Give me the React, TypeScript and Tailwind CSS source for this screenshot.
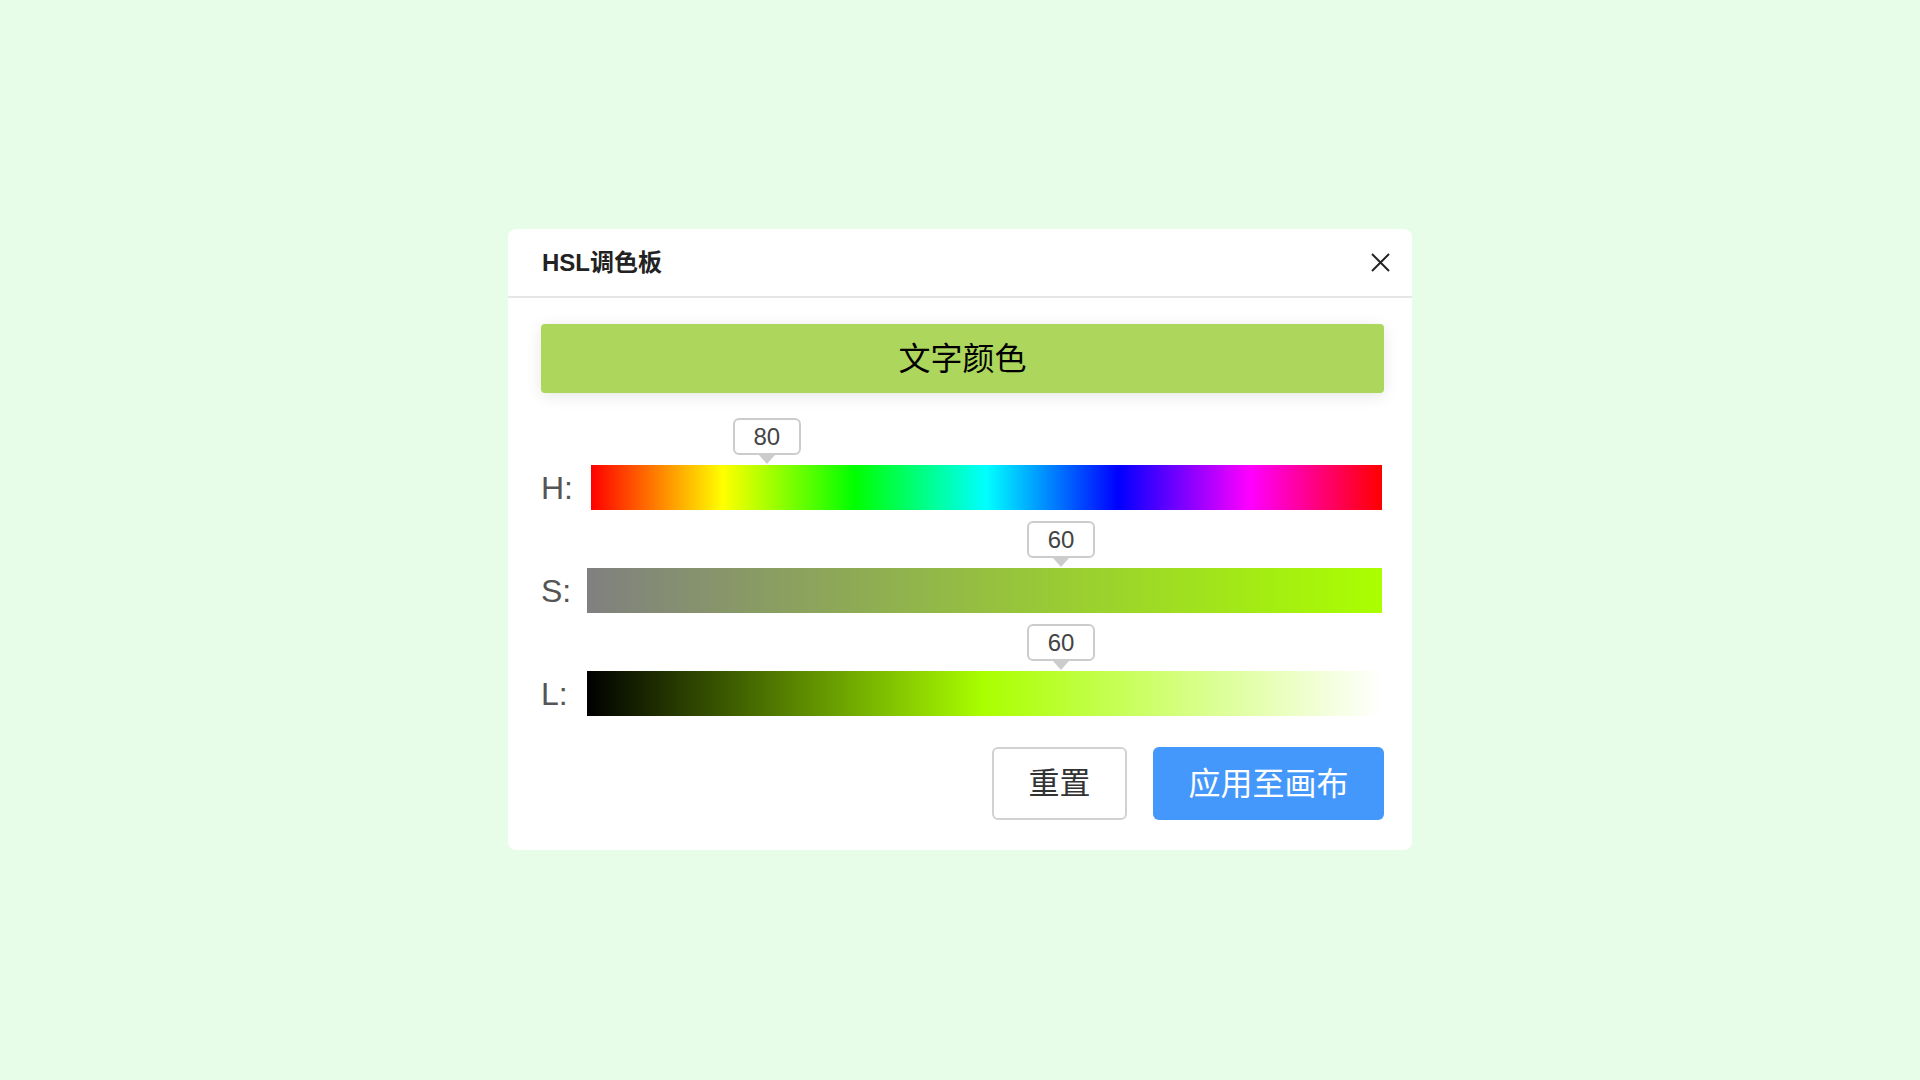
import React from "react";

const FONT = '"Liberation Sans", "Noto Sans CJK SC", sans-serif';

function Tip({ value, left }: { value: number; left: string }) {
  return (
    <div
      className="absolute bottom-full flex flex-col items-center -translate-x-1/2 mb-[1px]"
      style={{ left }}
    >
      <div className="w-[68px] h-[37px] bg-white border-2 border-[#cccccc] rounded-[6px] flex items-center justify-center text-[24px] leading-none text-[#444444]">
        {value}
      </div>
      <div className="w-0 h-0 border-l-[8px] border-r-[8px] border-t-[9px] border-l-transparent border-r-transparent border-t-[#cccccc]" />
    </div>
  );
}

function Row({
  label,
  value,
  left,
  labelClass,
  barClass,
}: {
  label: string;
  value: number;
  left: string;
  labelClass: string;
  barClass: string;
}) {
  return (
    <div className="flex items-center">
      <div className={`text-[32px] leading-none text-[#555555] ${labelClass}`}>{label}</div>
      <div className={`relative flex-1 h-[45px] mr-[2px] ${barClass}`}>
        <Tip value={value} left={left} />
      </div>
    </div>
  );
}

export default function App() {
  return (
    <div
      className="w-full h-[1080px] bg-[#e7fde7] flex items-start justify-center"
      style={{ fontFamily: FONT }}
    >
      <div className="mt-[229px] w-[904px] bg-white rounded-[8px] flex flex-col">
        <div className="h-[69px] border-b-2 border-[#e6e6e6] flex items-center justify-between pl-[34px] pr-[22px]">
          <div className="text-[24px] font-bold text-[#222222] leading-none">HSL调色板</div>
          <svg width="19" height="19" viewBox="0 0 19 19" className="block">
            <line x1="1" y1="1" x2="18" y2="18" stroke="#222222" strokeWidth="2" />
            <line x1="18" y1="1" x2="1" y2="18" stroke="#222222" strokeWidth="2" />
          </svg>
        </div>
        <div className="pt-[26px] pb-[30px] pl-[33px] pr-[28px] flex flex-col">
          <div className="h-[69px] rounded-[4px] bg-[#add65c] shadow-[0_3px_16px_rgba(0,0,0,0.1)] flex items-center justify-center text-[32px] text-black leading-none">
            文字颜色
          </div>
          <div className="mt-[72px] flex flex-col gap-[58px]">
            <Row
              label="H:"
              value={80}
              left={`${(80 / 360) * 100}%`}
              labelClass="w-[50px]"
              barClass="bg-[linear-gradient(to_right,#ff0000,#ffff00,#00ff00,#00ffff,#0000ff,#ff00ff,#ff0000)]"
            />
            <Row
              label="S:"
              value={60}
              left="calc(60% - 3px)"
              labelClass="w-[46px]"
              barClass="bg-[linear-gradient(to_right,#808080,#aaff00)]"
            />
            <Row
              label="L:"
              value={60}
              left="calc(60% - 3px)"
              labelClass="w-[46px]"
              barClass="bg-[linear-gradient(to_right,#000000,#aaff00,#ffffff)]"
            />
          </div>
          <div className="mt-[31px] flex justify-end gap-[26px]">
            <button className="w-[135px] h-[73px] border-2 border-[#d2d2d2] rounded-[6px] bg-white text-[31px] text-[#333333] leading-none flex items-center justify-center">
              重置
            </button>
            <button className="w-[231px] h-[73px] rounded-[6px] bg-[#4598fb] text-[32px] text-white leading-none flex items-center justify-center">
              应用至画布
            </button>
          </div>
        </div>
      </div>
    </div>
  );
}
